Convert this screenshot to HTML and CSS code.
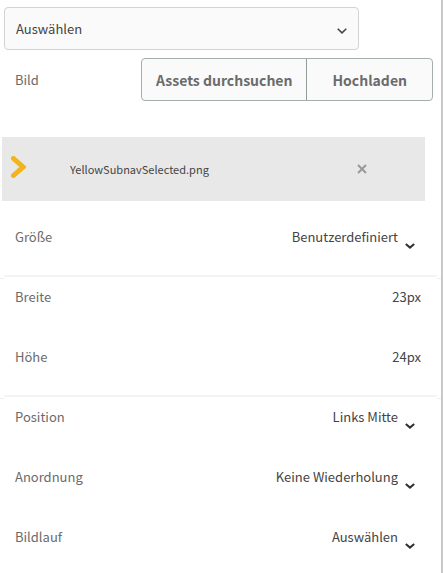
FILE: index.html
```html
<!DOCTYPE html>
<html lang="de">
<head>
<meta charset="utf-8">
<title>Bild</title>
<link rel="stylesheet" href="styles.css">
</head>
<body>
<main class="panel">
  <div class="picker">
    <select class="picker-select" aria-label="Auswahl"><option>Auswählen</option></select>
    <svg class="picker-chevron" viewBox="0 0 10 6" aria-hidden="true"><path d="M.7.8 5 4.9 9.3.8"/></svg>
  </div>

  <div class="image-row">
    <span class="label">Bild</span>
    <div class="buttons">
      <button class="button" type="button">Assets durchsuchen</button>
      <button class="button" type="button">Hochladen</button>
    </div>
  </div>

  <div class="file">
    <svg class="thumb" viewBox="0 0 15 22" aria-hidden="true"><path d="M2.5 2.5 12 11 2.5 19.5"/></svg>
    <span class="file-name">YellowSubnavSelected.png</span>
    <button class="remove" type="button" aria-label="Entfernen"><svg viewBox="0 0 10 10" aria-hidden="true"><path d="m1 1 8 8M9 1 1 9"/></svg></button>
  </div>

  <section class="group">
    <div class="row">
      <label class="label" for="size">Größe</label>
      <select class="value" id="size"><option>Benutzerdefiniert</option></select>
      <svg class="chevron" viewBox="0 0 10 6" aria-hidden="true"><path d="M.8 1 5 4.6 9.2 1"/></svg>
    </div>
  </section>

  <div class="divider"><span></span><span class="divider-main"></span><span></span></div>

  <section class="group">
    <div class="row">
      <label class="label" for="width">Breite</label>
      <input class="value" id="width" type="text" value="23px">
    </div>
    <div class="row">
      <label class="label" for="height">Höhe</label>
      <input class="value" id="height" type="text" value="24px">
    </div>
  </section>

  <div class="divider"><span></span><span class="divider-main"></span><span></span></div>

  <section class="group">
    <div class="row">
      <label class="label" for="position">Position</label>
      <select class="value" id="position"><option>Links Mitte</option></select>
      <svg class="chevron" viewBox="0 0 10 6" aria-hidden="true"><path d="M.8 1 5 4.6 9.2 1"/></svg>
    </div>
    <div class="row">
      <label class="label" for="repeat">Anordnung</label>
      <select class="value" id="repeat"><option>Keine Wiederholung</option></select>
      <svg class="chevron" viewBox="0 0 10 6" aria-hidden="true"><path d="M.8 1 5 4.6 9.2 1"/></svg>
    </div>
    <div class="row">
      <label class="label" for="scroll">Bildlauf</label>
      <select class="value" id="scroll"><option>Auswählen</option></select>
      <svg class="chevron" viewBox="0 0 10 6" aria-hidden="true"><path d="M.8 1 5 4.6 9.2 1"/></svg>
    </div>
  </section>
</main>
</body>
</html>
```
FILE: styles.css
```css
* { box-sizing: border-box; }

body {
  margin: 0;
  background: #fff;
  color: #444;
  font: 13px/24px "Noto Sans CJK JP", "Noto Sans", sans-serif;
}

select, input, button {
  appearance: none;
  margin: 0;
  padding: 0;
  border: 0;
  background: none;
  color: inherit;
  font: inherit;
}

svg {
  display: block;
  flex: none;
  fill: none;
  stroke: currentColor;
}

.panel {
  min-height: 100vh;
  padding-top: 7px;
  border-right: 2px solid #c8c8c8;
}

.picker {
  position: relative;
  margin: 0 82px 8px 4px;
}

.picker-select {
  display: block;
  width: 100%;
  height: 43px;
  padding: 0 32px 0 11px;
  border: 1px solid #d3d3d3;
  border-radius: 4px;
  background: #fafafa;
}

.picker-chevron {
  position: absolute;
  top: 21px;
  right: 12px;
  width: 10px;
  height: 6px;
  stroke-width: 1.5;
}

.image-row {
  display: flex;
  align-items: center;
  justify-content: space-between;
  padding: 0 8px 0 15px;
}

.label { color: #6b6b6b; }

.buttons {
  display: flex;
  border: 1px solid #a5adad;
  border-radius: 4px;
  background: #fafafa;
}

.button {
  height: 41px;
  padding: 0 14px;
  color: #6b6b6b;
  font-size: 14px;
  font-weight: 700;
}

.button + .button {
  padding: 0 25px;
  border-left: 1px solid #959b9b;
}

.file {
  display: flex;
  align-items: center;
  height: 64px;
  margin: 36px 16px 24px 2px;
  padding: 0 58px 0 9px;
  background: #e8e8e8;
}

.thumb {
  width: 15px;
  height: 22px;
  margin-bottom: 4px;
  stroke: #f3b41b;
  stroke-width: 5;
  stroke-linecap: round;
}

.file-name {
  flex: 1;
  margin-left: 44px;
  font-size: 11px;
}

.remove { color: #999; }

.remove svg {
  width: 10px;
  height: 10px;
  stroke-width: 2;
}

.group {
  display: grid;
  gap: 36px;
  padding: 0 20px 0 15px;
}

.row {
  display: flex;
  align-items: center;
}

.value {
  flex: 1;
  min-width: 0;
  height: 24px;
  text-align: right;
  text-align-last: right;
}

.chevron {
  align-self: flex-end;
  width: 10px;
  height: 6px;
  margin: 0 6px 0 7px;
  color: #303030;
  stroke-width: 2;
}

.divider {
  display: grid;
  grid-template-columns: 4px 1fr 4px;
  align-items: end;
  height: 4px;
  margin: 26px 0 6px;
}

.divider span { border-bottom: 1px solid #eee; }

.divider .divider-main {
  align-self: start;
  border-bottom: 2px solid #f4f4f4;
}
```
